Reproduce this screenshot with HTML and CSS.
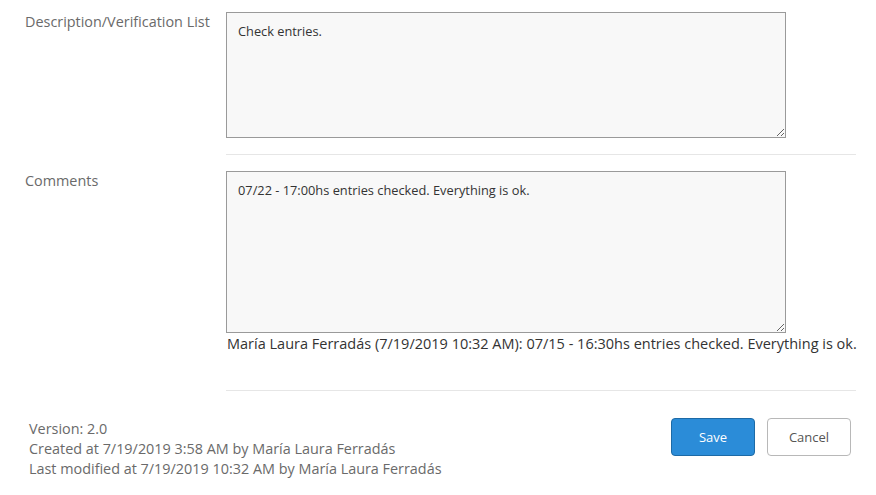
FILE: index.html
```html
<!DOCTYPE html>
<html>
<head>
<meta charset="utf-8">
<link rel="stylesheet" href="styles.css">
</head>
<body>
<div class="form">
  <div class="row first">
    <div class="label">Description/Verification List</div>
    <div class="field">
      <textarea class="box box-desc" readonly>Check entries.</textarea>
    </div>
  </div>
  <div class="row">
    <div class="label">Comments</div>
    <div class="field">
      <textarea class="box box-comments" readonly>07/22 - 17:00hs entries checked. Everything is ok.</textarea>
      <div class="history">María Laura Ferradás (7/19/2019 10:32 AM): 07/15 - 16:30hs entries checked. Everything is ok.</div>
    </div>
  </div>
  <div class="footer">
    <div class="meta">
      <div>Version: 2.0</div>
      <div>Created at 7/19/2019 3:58 AM by María Laura Ferradás</div>
      <div>Last modified at 7/19/2019 10:32 AM by María Laura Ferradás</div>
    </div>
    <div class="actions">
      <button class="btn btn-save">Save</button>
      <button class="btn btn-cancel">Cancel</button>
    </div>
  </div>
</div>
</body>
</html>
```

FILE: styles.css
```css
html, body {
  margin: 0;
  padding: 0;
  background: #ffffff;
}
body {
  font-family: "Open Sans", "Noto Sans", sans-serif;
  color: #666666;
}
.form {
  padding: 12px 20px 0 25px;
}
.row {
  display: flex;
}
.label {
  width: 201px;
  flex: none;
  font-size: 14.4px;
  line-height: 20px;
  color: #6a6a6a;
}
.field {
  width: 630px;
  flex: none;
}
.row.first .field {
  padding-bottom: 16px;
  border-bottom: 1px solid #e6e6e6;
  margin-bottom: 16px;
}
.row:not(.first) .field {
  padding-bottom: 35px;
  border-bottom: 1px solid #e6e6e6;
}
.box {
  display: block;
  box-sizing: border-box;
  width: 560px;
  margin: 0;
  padding: 9px 11px 10px;
  background: #f8f8f8;
  border: 1px solid #9a9a9a;
  border-radius: 0;
  font-family: "Open Sans", "Noto Sans", sans-serif;
  font-size: 12.8px;
  line-height: 18px;
  color: #333333;
  resize: vertical;
  outline: none;
}
.box-desc {
  height: 126px;
}
.box-comments {
  height: 162px;
}
.history {
  font-family: "Open Sans", "Noto Sans", sans-serif;
  font-size: 14.5px;
  line-height: 22px;
  color: #333333;
  white-space: nowrap;
  margin-left: 1px;
}
.footer {
  display: flex;
  justify-content: space-between;
  align-items: flex-start;
  padding: 27px 5px 0 4px;
}
.meta {
  font-size: 14.4px;
  line-height: 20px;
  color: #6a6a6a;
  padding-top: 1px;
}
.actions {
  display: flex;
  gap: 12px;
}
.btn {
  box-sizing: border-box;
  width: 84px;
  height: 38px;
  border-radius: 4px;
  font-family: "Open Sans", "Noto Sans", sans-serif;
  font-size: 13px;
  cursor: pointer;
}
.btn-save {
  background: #2b8cd8;
  border: 1px solid #1d6aa6;
  color: #ffffff;
}
.btn-cancel {
  background: #ffffff;
  border: 1px solid #b8b8b8;
  color: #555555;
}
```
